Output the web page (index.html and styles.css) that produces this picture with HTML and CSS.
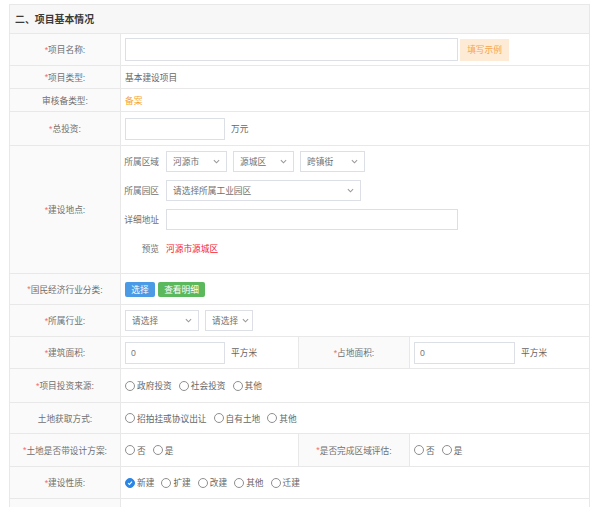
FILE: index.html
```html
<!DOCTYPE html>
<html lang="zh-CN">
<head>
<meta charset="utf-8">
<title>项目基本情况</title>
<link rel="stylesheet" href="styles.css">
</head>
<body>
<div class="form">
  <div class="head">二、项目基本情况</div>

  <div class="lbl"><i>*</i>项目名称:</div>
  <div class="val span3">
    <div class="input w333"></div>
    <span class="btn-sample">填写示例</span>
  </div>

  <div class="lbl"><i>*</i>项目类型:</div>
  <div class="val span3">基本建设项目</div>

  <div class="lbl">审核备类型:</div>
  <div class="val span3"><span class="orange">备案</span></div>

  <div class="lbl"><i>*</i>总投资:</div>
  <div class="val span3">
    <div class="input w100"></div>
    <span class="unit">万元</span>
  </div>

  <div class="lbl"><i>*</i>建设地点:</div>
  <div class="val span3 addr">
    <div class="addr-grid">
      <span class="sub">所属区域</span>
      <div class="line">
        <div class="sel w61"><span>河源市</span><svg class="chev" viewBox="0 0 8 5"><path d="M1 1l3 3 3-3"/></svg></div>
        <div class="sel w61"><span>源城区</span><svg class="chev" viewBox="0 0 8 5"><path d="M1 1l3 3 3-3"/></svg></div>
        <div class="sel w65"><span>跨镇街</span><svg class="chev" viewBox="0 0 8 5"><path d="M1 1l3 3 3-3"/></svg></div>
      </div>
      <span class="sub">所属园区</span>
      <div class="line">
        <div class="sel w195"><span>请选择所属工业园区</span><svg class="chev" viewBox="0 0 8 5"><path d="M1 1l3 3 3-3"/></svg></div>
      </div>
      <span class="sub">详细地址</span>
      <div class="line"><div class="input w292 h21"></div></div>
      <span class="sub">预览</span>
      <div class="line"><span class="red">河源市源城区</span></div>
    </div>
  </div>

  <div class="lbl"><i>*</i>国民经济行业分类:</div>
  <div class="val span3">
    <span class="btn blue">选择</span>
    <span class="btn green">查看明细</span>
  </div>

  <div class="lbl"><i>*</i>所属行业:</div>
  <div class="val span3">
    <div class="sel w74 h23"><span>请选择</span><svg class="chev" viewBox="0 0 8 5"><path d="M1 1l3 3 3-3"/></svg></div>
    <div class="sel w48 h23 tight"><span>请选择</span><svg class="chev" viewBox="0 0 8 5"><path d="M1 1l3 3 3-3"/></svg></div>
  </div>

  <div class="lbl"><i>*</i>建筑面积:</div>
  <div class="val">
    <div class="input w100">0</div>
    <span class="unit">平方米</span>
  </div>
  <div class="lbl"><i>*</i>占地面积:</div>
  <div class="val">
    <div class="input w101">0</div>
    <span class="unit">平方米</span>
  </div>

  <div class="lbl"><i>*</i>项目投资来源:</div>
  <div class="val span3">
    <label class="radio"><span class="dot"></span>政府投资</label>
    <label class="radio"><span class="dot"></span>社会投资</label>
    <label class="radio"><span class="dot"></span>其他</label>
  </div>

  <div class="lbl">土地获取方式:</div>
  <div class="val span3">
    <label class="radio"><span class="dot"></span>招拍挂或协议出让</label>
    <label class="radio"><span class="dot"></span>自有土地</label>
    <label class="radio"><span class="dot"></span>其他</label>
  </div>

  <div class="lbl"><i>*</i>土地是否带设计方案:</div>
  <div class="val">
    <label class="radio"><span class="dot"></span>否</label>
    <label class="radio"><span class="dot"></span>是</label>
  </div>
  <div class="lbl"><i>*</i>是否完成区域评估:</div>
  <div class="val">
    <label class="radio"><span class="dot"></span>否</label>
    <label class="radio"><span class="dot"></span>是</label>
  </div>

  <div class="lbl"><i>*</i>建设性质:</div>
  <div class="val span3">
    <label class="radio"><span class="dot on"><svg viewBox="0 0 10 10"><path d="M2.6 5.1l1.7 1.7 3.2-3.4"/></svg></span>新建</label>
    <label class="radio"><span class="dot"></span>扩建</label>
    <label class="radio"><span class="dot"></span>改建</label>
    <label class="radio"><span class="dot"></span>其他</label>
    <label class="radio"><span class="dot"></span>迁建</label>
  </div>

  <div class="lbl"></div>
  <div class="val span3"></div>
</div>
</body>
</html>
```

FILE: styles.css
```css
* { box-sizing: border-box; }

html, body {
  margin: 0;
  padding: 0;
  background: #fff;
}

body {
  padding: 4px 0 0 9px;
  font-family: "Liberation Sans", "Noto Sans CJK SC", sans-serif;
  font-size: 8.7px;
  color: #666;
}

.form {
  width: 581px;
  display: grid;
  grid-template-columns: 111px 178px 111px 180px;
  grid-template-rows: 29px 32px 23px 23px 34px 128px 31px 32px 32px 34px 31px 33px 32px 32px;
  border-left: 1px solid #e8e8e8;
  border-top: 1px solid #e8e8e8;
}

.form > div {
  border-right: 1px solid #e8e8e8;
  border-bottom: 1px solid #e8e8e8;
}

.head {
  grid-column: 1 / span 4;
  background: #f7f7f7;
  display: flex;
  align-items: center;
  padding-left: 5px;
  font-size: 9.9px;
  font-weight: bold;
  color: #3a3a3a;
}

.lbl {
  background: #fafafa;
  display: flex;
  align-items: center;
  justify-content: center;
  color: #707070;
  white-space: nowrap;
}

.lbl i {
  font-style: normal;
  color: #f56c6c;
}

.val {
  display: flex;
  align-items: center;
  padding-left: 4px;
  white-space: nowrap;
  color: #666;
}

.span3 { grid-column: 2 / span 3; }

.input {
  height: 22px;
  border: 1px solid #dcdfe6;
  background: #fff;
  display: flex;
  align-items: center;
  padding-left: 5px;
  color: #777;
}

.h21 { height: 21px; }
.h23 { height: 23px; }
.w333 { width: 333px; height: 23px; }
.w100 { width: 100px; }
.w101 { width: 101px; }
.w292 { width: 292px; }
.w61 { width: 61px; }
.w65 { width: 65px; }
.w195 { width: 195px; }
.w74 { width: 74px; }
.w48 { width: 48px; }

.btn-sample {
  margin-left: 2px;
  width: 49px;
  height: 22px;
  background: #fdebd6;
  color: #f6a54e;
  display: flex;
  align-items: center;
  justify-content: center;
}

.orange { color: #f7a52a; }
.red { color: #f5222d; }

.unit {
  margin-left: 6px;
  color: #666;
}

.addr {
  align-items: flex-start;
  padding-top: 5px;
}

.addr-grid {
  display: grid;
  grid-template-columns: 34px auto;
  grid-auto-rows: 21px;
  column-gap: 7px;
  row-gap: 8px;
}

.sub {
  display: flex;
  align-items: center;
  justify-content: flex-end;
  color: #707070;
}

.line {
  display: flex;
  align-items: center;
  gap: 6px;
}

.sel {
  height: 21px;
  border: 1px solid #dcdfe6;
  background: #fff;
  display: flex;
  align-items: center;
  justify-content: space-between;
  padding: 0 6px 0 6px;
  color: #707070;
  overflow: hidden;
}

.sel.tight {
  padding: 0 4px 0 6px;
  justify-content: flex-start;
  gap: 4px;
}

.val > .sel + .sel { margin-left: 6px; }

.chev {
  flex: 0 0 7px;
  width: 7px;
  height: 5px;
  fill: none;
  stroke: #999;
  stroke-width: 1.2;
}

.btn {
  height: 15px;
  display: flex;
  align-items: center;
  justify-content: center;
  color: #fff;
  border-radius: 2px;
}

.blue {
  width: 30px;
  background: #4a9ae6;
}

.green {
  width: 47px;
  margin-left: 3px;
  background: #5cb85c;
}

.radio {
  display: flex;
  align-items: center;
  margin-right: 7px;
  color: #666;
}

.dot {
  flex: 0 0 10px;
  width: 10px;
  height: 10px;
  border: 1px solid #8f8f8f;
  border-radius: 50%;
  margin-right: 2px;
  background: #fff;
  display: flex;
}

.dot.on {
  background: #2b85e4;
  border-color: #2b85e4;
}

.dot.on svg {
  width: 100%;
  height: 100%;
  fill: none;
  stroke: #fff;
  stroke-width: 1.4;
}
```
